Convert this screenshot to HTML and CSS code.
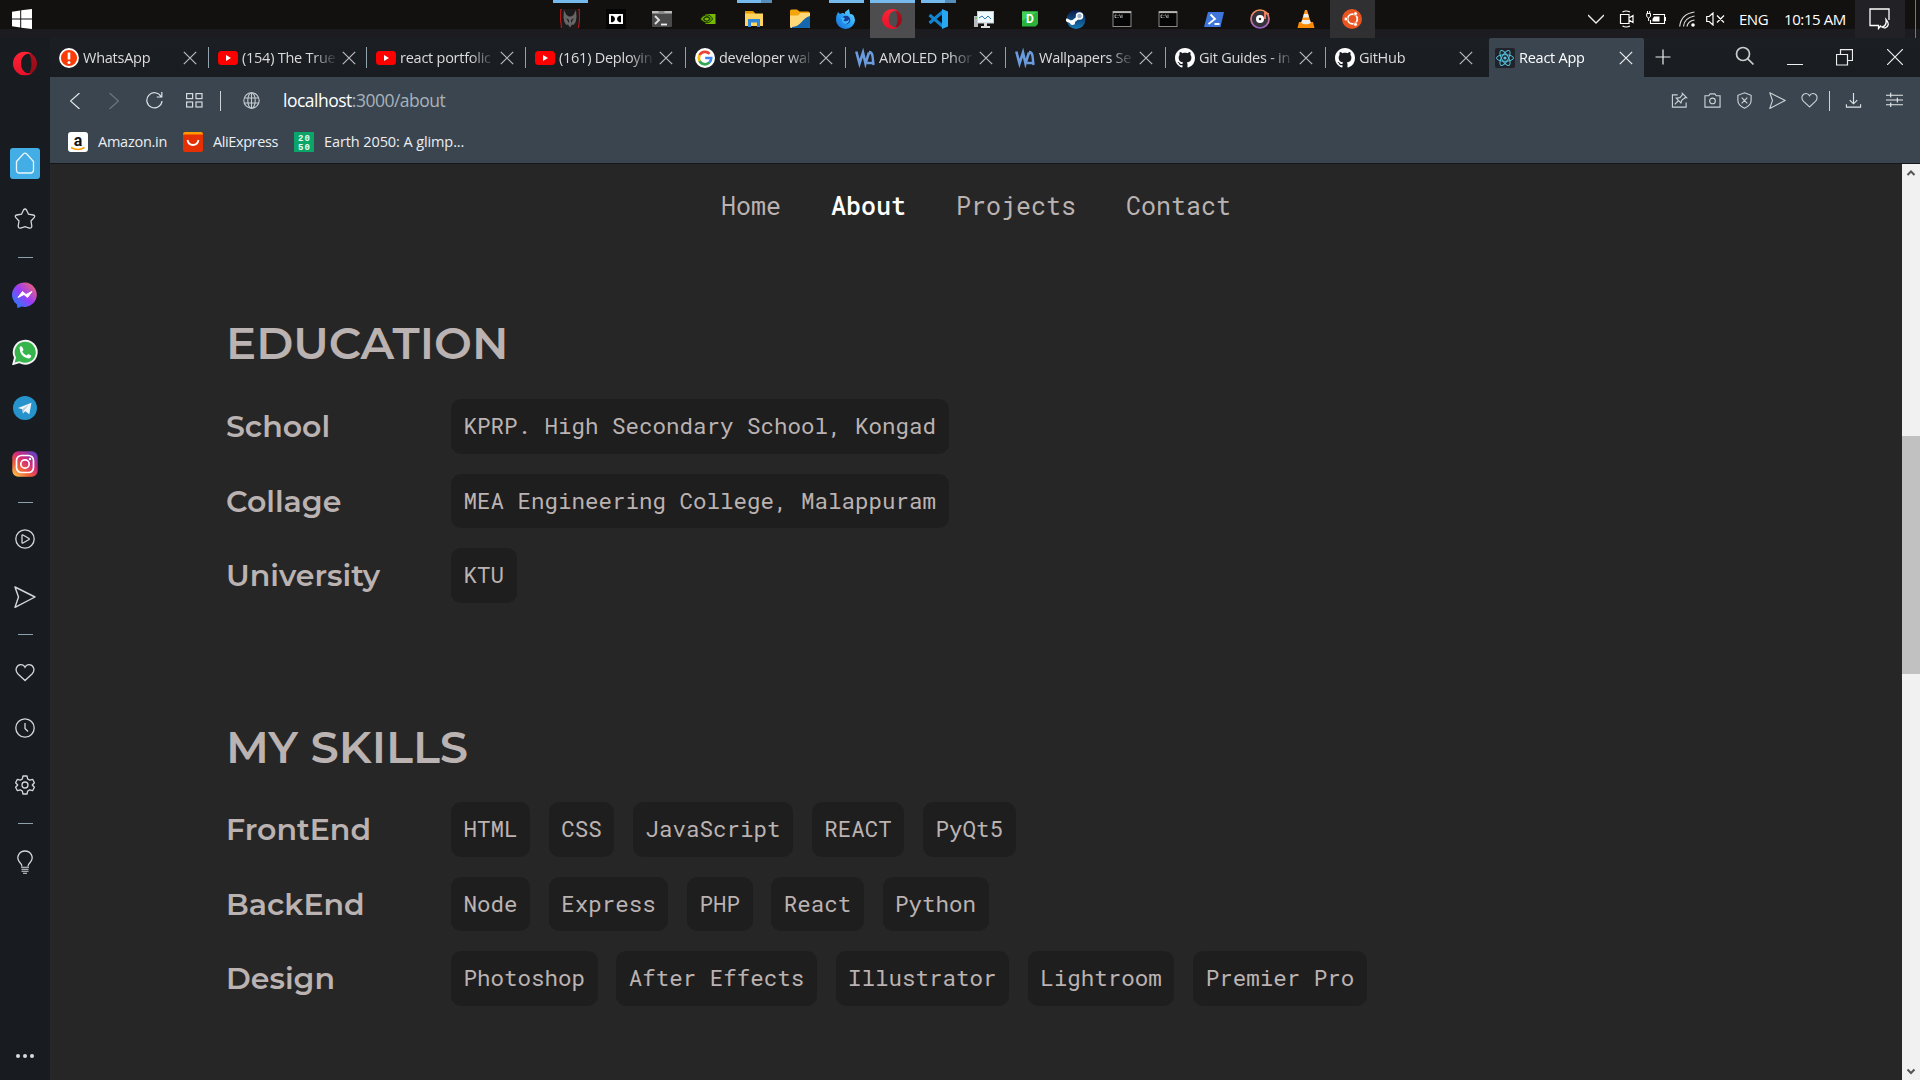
FILE: index.html
```html
<!DOCTYPE html>
<html lang="en">
<head>
<meta charset="utf-8">
<title>React App</title>
<link rel="stylesheet" href="styles.css">
</head>
<body>
<svg class="defs" width="0" height="0" aria-hidden="true">
  <defs>
    <linearGradient id="operaA" x1="0" y1="0" x2="0" y2="1"><stop offset="0" stop-color="#ff2436"/><stop offset="1" stop-color="#e8102a"/></linearGradient>
    <linearGradient id="operaB" x1="0" y1="0" x2="0" y2="1"><stop offset="0" stop-color="#b3101f"/><stop offset="1" stop-color="#8d0a15"/></linearGradient>
    <linearGradient id="msg" x1="0" y1="1" x2="1" y2="0"><stop offset="0" stop-color="#0a8cff"/><stop offset=".5" stop-color="#9a3cf5"/><stop offset="1" stop-color="#ff6a62"/></linearGradient>
    <linearGradient id="insta" x1="0.1" y1="1" x2=".9" y2="0"><stop offset="0" stop-color="#fdc650"/><stop offset=".3" stop-color="#f0603a"/><stop offset=".6" stop-color="#d02b7c"/><stop offset="1" stop-color="#5a45c8"/></linearGradient>
    <linearGradient id="groove" x1="0" y1="0" x2="0" y2="1"><stop offset="0" stop-color="#f79452"/><stop offset=".5" stop-color="#d47a8e"/><stop offset="1" stop-color="#9a60c8"/></linearGradient>
    <linearGradient id="fox" x1="1" y1="0" x2="0" y2="1"><stop offset="0" stop-color="#6fe3ff"/><stop offset=".5" stop-color="#2aa3f5"/><stop offset="1" stop-color="#1668d8"/></linearGradient>
    <linearGradient id="steam" x1="0" y1="0" x2="0" y2="1"><stop offset="0" stop-color="#0c1a4a"/><stop offset="1" stop-color="#137ab5"/></linearGradient>
    <symbol id="x" viewBox="0 0 14 14"><path d="M.8.8l12.4 12.4M13.2.8L.8 13.2" fill="none" stroke="currentColor" stroke-width="1.2"/></symbol>
    <symbol id="yt" viewBox="0 0 20 20"><rect y="3" width="20" height="14" rx="3.5" fill="#f00"/><path d="M8 7l5 3-5 3z" fill="#fff"/></symbol>
    <symbol id="wa" viewBox="0 0 20 20"><path d="M1.300 3.500L4.500 15.500 8 4.500l2.500 11L14 4.500" fill="none" stroke="#6a9bdc" stroke-width="2.600"/><path d="M14 4q3 0 3.500 4l1 9M12 15h6" fill="none" stroke="#6a9bdc" stroke-width="2.400"/></symbol>
    <symbol id="gh" viewBox="0 0 16 16"><path fill="#fff" d="M8 0C3.580 0 0 3.580 0 8c0 3.540 2.290 6.530 5.470 7.590.4.070.55-.17.55-.38 0-.19-.01-.82-.01-1.490-2.010.37-2.530-.49-2.690-.94-.09-.23-.48-.94-.82-1.130-.28-.15-.68-.52-.01-.53.63-.01 1.080.58 1.230.82.72 1.210 1.870.87 2.330.66.070-.52.28-.87.51-1.070-1.780-.2-3.640-.89-3.640-3.950 0-.87.31-1.590.82-2.150-.08-.2-.36-1.020.08-2.120 0 0 .67-.21 2.200.82.64-.18 1.320-.27 2-.27s1.360.09 2 .27c1.530-1.040 2.200-.82 2.200-.82.44 1.100.16 1.920.08 2.120.51.56.82 1.270.82 2.150 0 3.070-1.870 3.750-3.650 3.950.29.25.54.73.54 1.480 0 1.070-.01 1.930-.01 2.200 0 .21.15.46.55.38A8.010 8.010 0 0 0 16 8c0-4.420-3.580-8-8-8z"/></symbol>
    <symbol id="opera" viewBox="0 0 24 24"><path fill="url(#operaB)" d="M12 .5c6.500 0 12 5 12 11.500S18.500 23.500 12 23.500c4.500 0 6.500-5 6.500-11.500S16.500.5 12 .5z"/><path fill="url(#operaA)" fill-rule="evenodd" d="M12 0a12 12 0 1 0 0 24c3 0 5.500-1 7.500-2.800-5 2.600-11.500-1.200-11.500-9.200s6.500-11.800 11.500-9.200A11.500 11.500 0 0 0 12 0z"/></symbol>
    <symbol id="cmd" viewBox="0 0 20 20"><rect x="1" y="2.500" width="18" height="15" fill="#050505" stroke="#8a8a8a"/><path d="M1 3.200h18" stroke="#b5b5b5" stroke-width="1.800"/><path d="M4.500 6H3v2.500h1.500M6 6v.8M6 8v.8M7.500 5.500L9 9M10 5.500V9" fill="none" stroke="#ccc" stroke-width=".8"/></symbol>
    <symbol id="heart" viewBox="0 0 20 20"><path d="M10 17.500L3 11C-1 6.500 2 1.700 6 1.700c2 0 3.200 1 4 2.600.8-1.600 2-2.600 4-2.600 4 0 7 4.800 3 9.300z" fill="none" stroke="currentColor" stroke-width="1.300"/></symbol>
    <symbol id="send" viewBox="0 0 22 22"><path d="M1 1l20 10L1 21.300 4.500 11z" fill="none" stroke="currentColor" stroke-width="1.400" stroke-linejoin="round"/></symbol>
  </defs>
</svg>

<header class="taskbar">
  <svg class="start" viewBox="0 0 20 20"><path fill="#fff" d="M0 2.700L8.200 1.500v8H0zM9.200 1.300L20 0v9.500H9.200zM0 10.500h8.200v8L0 17.300zM9.200 10.500H20V20L9.200 18.700z"/></svg>
  <div class="apps">
    <span class="app run"><svg viewBox="0 0 20 20"><rect x="1.500" width="17" height="20" fill="#1c1a1a"/><path d="M2 .5H.8L.5 10l1 9M18 .5h1.200l.3 9.500-1 9" stroke="#b81818" stroke-width="1.200" fill="none"/><path d="M4 1l2.500 5L9 7.500h2L13.500 6 16 1l.5 7-.8 5-2.200 3-1.500-.5-2 3-2-3-1.500.5-2.200-3-.8-5z" fill="#666"/><path d="M6 9l3 2v3zM14 9l-3 2v3z" fill="#1c1a1a"/></svg></span>
    <span class="app"><svg viewBox="0 0 20 20"><rect width="20" height="20" fill="#050505"/><path fill="#fff" d="M3 5h14v10H3z"/><path d="M5 6.800h1.500q2.500.7 2.500 3.200t-2.500 3.200H5zM15 6.800h-1.500q-2.500.7-2.500 3.200t2.500 3.200H15z"/></svg></span>
    <span class="app"><svg viewBox="0 0 20 20"><rect y="2" width="20" height="16" rx="1" fill="#4a4a4a"/><path d="M0 4V2h20v2.500H0z" fill="#bbb"/><path d="M6.500 2h6v2.500h-6z" fill="#888"/><path d="M3 7l4 4-4 4" fill="none" stroke="#ddd" stroke-width="2"/><path d="M9 15.500h6" stroke="#eee" stroke-width="1.800"/></svg></span>
    <span class="app"><svg viewBox="0 0 20 20"><path fill="#76b900" d="M7.500 5h10v10h-10z"/><path d="M2.500 10c4-6 10-5 12 0-3 5-8 5-12 0z" fill="#76b900" stroke="#173000"/><path d="M5.500 10c2-3 5-3 6.500 0-2 3-5 2.500-6.500 0z" fill="none" stroke="#173000" stroke-width="1.300"/></svg></span>
    <span class="app run many"><svg viewBox="0 0 20 20"><path fill="#e69a08" d="M1 2h8l2 2v3H1z"/><path fill="#ffd55f" d="M1 4.500h18V17H1z"/><path fill="#2e87dd" d="M4 10h12v8h-3v-4.500H7V18H4z"/></svg></span>
    <span class="app"><svg viewBox="0 0 20 20"><path fill="#f4a40d" d="M0 2q0-1.500 1.500-1.500H7l2.500 2H18q2 0 2 2V9H0z"/><path fill="#ffd879" d="M0 6.500h8L10.500 4H20v13.500q0 1.500-1.500 1.500h-17Q0 19 0 17.500z"/><path fill="#1567ad" d="M2 18c9 0 10-9 18-11v10.500q0 1.500-1.500 1.500H2z"/></svg></span>
    <span class="app run"><svg viewBox="0 0 20 20"><path fill="url(#fox)" d="M2 3l2 2q3-2 5 0V3l4-3 1 5q4-1 5 6a9.500 9 0 0 1-19 0q0-5 2-8z"/><circle cx="10" cy="11" r="4.300" fill="#183a91"/><path d="M5 8l4 1-1.500 3q4 1 6-2-1 7-7 4z" fill="#3bb5ff"/></svg></span>
    <span class="app run active"><svg viewBox="0 0 24 24"><use href="#opera"/></svg></span>
    <span class="app run many"><svg viewBox="0 0 20 20"><path d="M1.500 6L15 17.500M1.500 14L15 2.500" stroke="#1384cf" stroke-width="3"/><path fill="#28a8f2" d="M14 0l6 2.500v15L14 20z"/></svg></span>
    <span class="app"><svg viewBox="0 0 20 20"><path fill="#b4b8ba" d="M0 7h4v11H0z"/><path d="M1 9h2" stroke="#3c3"/><rect x="3.500" y="2.500" width="16" height="11.500" fill="#eefaff" stroke="#c8cdcf"/><path d="M5 9l3-2 3 3 3-3 3 3" stroke="#2f78b4" fill="none"/><path d="M10 14h3v3h3v2H7v-2h3z" fill="#ddd"/></svg></span>
    <span class="app"><svg viewBox="0 0 20 20"><path fill="#29b33a" d="M2 2.500h16V15l-2.500 2.500H2z"/><path fill="#43d055" d="M2 2.500h16L2 12z"/><text x="10" y="14.200" class="glyph-d">D</text></svg></span>
    <span class="app"><svg viewBox="0 0 20 20"><circle cx="10" cy="10.500" r="9.500" fill="url(#steam)"/><path d="M0 10.500l6 3 5.500-4.500" stroke="#fff" stroke-width="3" fill="none"/><circle cx="6.500" cy="13.500" r="2.500" fill="#fff"/><circle cx="13.500" cy="7" r="3" fill="#9db4cf" stroke="#fff" stroke-width="1.500"/></svg></span>
    <span class="app"><svg viewBox="0 0 20 20"><use href="#cmd"/></svg></span>
    <span class="app"><svg viewBox="0 0 20 20"><use href="#cmd"/></svg></span>
    <span class="app"><svg viewBox="0 0 20 20"><path fill="#3e76db" d="M4 3h16l-3.500 15H0z"/><path d="M6.500 5.500L11 10l-6.500 5M10.500 15h5" fill="none" stroke="#fff" stroke-width="1.800"/></svg></span>
    <span class="app"><svg viewBox="0 0 20 20"><circle cx="10" cy="10" r="9" fill="#35323c" stroke="url(#groove)" stroke-width="1.700"/><circle cx="10" cy="10" r="4" fill="#fff"/><circle cx="10" cy="10" r="1.200" fill="#333"/><path d="M15 10V4l4 1" fill="none" stroke="#f58560" stroke-width="1.800"/></svg></span>
    <span class="app"><svg viewBox="0 0 20 20"><path fill="#f98a05" d="M3 13h14l1.500 6h-17z"/><path fill="#ff9a1e" d="M9 1h2l4 13q-5 3-10 0z"/><path d="M8 5h4l1 3.500H7zM6.200 11h7.600l1 3q-5 2.500-9.600 0z" fill="#eee"/></svg></span>
    <span class="app shaded"><svg viewBox="0 0 20 20"><circle cx="10" cy="10" r="10" fill="#e95420"/><circle cx="10.500" cy="10" r="4.800" fill="none" stroke="#fff" stroke-width="1.800"/><g fill="#fff" stroke="#e95420" stroke-width=".7"><circle cx="4" cy="10" r="1.900"/><circle cx="13.500" cy="4.600" r="1.900"/><circle cx="13.500" cy="15.400" r="1.900"/></g></svg></span>
  </div>
  <div class="tray">
    <svg class="t-chev" viewBox="0 0 16 16"><path d="M0 4l8 8 8-8" fill="none" stroke="#eee" stroke-width="1.300"/></svg>
    <svg class="t-cam" viewBox="0 0 16 18"><path d="M1.500 4.500h8.500v9H1.500zM10 8l4-2.500v7L10 10M3.500 2Q7 0 11 2M3.500 16q3.500 2 7.500 0" fill="none" stroke="#fff" stroke-width="1.200"/></svg>
    <svg class="t-bat" viewBox="0 0 20 16"><path d="M7 3.500h11.500v9H4.500V9M18.500 6.500h1v3h-1" fill="none" stroke="#fff" stroke-width="1.100"/><path d="M8 5.500h5.500v5H6.500V8z" fill="#fff"/><path d="M.7 2.500h3.800v3L2.600 7 .7 5.500zM2.600 7v3M1.500 0v2.500M3.700 0v2.500" fill="none" stroke="#fff"/></svg>
    <svg class="t-wifi" viewBox="0 0 16 16"><g fill="none" stroke="#ddd" stroke-width="1.200"><path d="M.7 15.500Q2 3 15.500 1"/><path d="M4.500 15.500Q5 7 15.500 5"/><path d="M8 15.500Q9 10 15.500 9"/></g><circle cx="14" cy="14" r="1.800" fill="#fff"/></svg>
    <svg class="t-vol" viewBox="0 0 19 14"><path d="M.7 4.500h2.500L7 1v12L3.200 9.500H.7zM11 3.500l7 7M18 3.500l-7 7" fill="none" stroke="#fff" stroke-width="1.200"/></svg>
    <span class="lang">ENG</span>
    <span class="clock">10:15 AM</span>
    <span class="notif"><svg viewBox="0 0 22 22"><path d="M12 17.500l-2.500 3v-3H1V1h19v11" fill="none" stroke="#fff" stroke-width="1.300"/><path d="M17 11.500q5 6-1 8.500l-3-1q5-1 4-7.500z" fill="none" stroke="#fff" stroke-width="1.300"/></svg></span>
    <span class="peek"></span>
  </div>
</header>

<div class="browser">
  <aside class="sidebar">
    <svg width="24" height="25" viewBox="0 0 24 24"><use href="#opera"/></svg>
    <span></span>
    <span class="home"><svg width="20" height="22" viewBox="0 0 20 22"><path d="M1.500 9.500L8.500 1.800q1.500-1.300 3 0l7 7.700V18q0 3-3 3h-11q-3 0-3-3z" fill="none" stroke="#e8f6ff" stroke-width="1.300"/></svg></span>
    <svg width="22" height="22" viewBox="0 0 22 22"><path d="M9.500 2q1.500-2 3 0l2 4.200 4.700.8q2.500.6.9 2.700L17 13l.8 5q0 2.500-2.500 2L11 18.600 6.700 20q-2.500.5-2.500-2L5 13 1.900 9.700Q.3 7.600 2.800 7l4.700-.8z" fill="none" stroke="#d4d8da" stroke-width="1.300"/></svg>
    <i class="rule"></i>
    <svg width="26" height="26" viewBox="0 0 26 26"><path fill="url(#msg)" d="M13 .5a12.200 12.200 0 1 1-3.500 24l-3.500 1.500q-1 0-1-3.500A12.200 12.200 0 0 1 13 .5z"/><path d="M6 15.500l4.500-6 3.500 3 6-3-4.500 6-3.500-3z" fill="#fff" stroke="#fff"/></svg>
    <svg width="26" height="26" viewBox="0 0 26 26"><path d="M1.300 25L3 18.500A11.500 11.500 0 1 1 7.500 23.200z" fill="#35b54b" stroke="#f4f4f4" stroke-width="1.900"/><path d="M7.500 8.500Q9 6 10.500 8.500l1 2.500-1.300 1.700Q12 15.500 14.700 16.500l1.500-1.500 3 1.500q0 3-3 3Q8 18 7.500 8.500z" fill="#fff"/></svg>
    <svg width="24" height="24" viewBox="0 0 24 24"><circle cx="12" cy="12" r="12" fill="#2693cd"/><path d="M5 12l13.500-5.300-2.200 11.500-4-3-2.300 2.300-.7-4.200z" fill="#eef4f8"/><path d="M9.300 13.300L16 8.500l-5 6-1 3z" fill="#b5cbda"/></svg>
    <svg width="26" height="26" viewBox="0 0 26 26"><rect x=".3" y=".3" width="25.400" height="25.400" rx="6" fill="url(#insta)"/><rect x="4.500" y="4.500" width="17" height="17" rx="5" fill="none" stroke="#fff" stroke-width="1.700"/><circle cx="13" cy="13" r="4.200" fill="none" stroke="#fff" stroke-width="1.700"/><circle cx="18" cy="8" r="1.200" fill="#fff"/></svg>
    <i class="rule"></i>
    <svg width="20" height="20" viewBox="0 0 20 20"><g fill="none" stroke="#d4d8da" stroke-width="1.300"><circle cx="10" cy="10" r="9.200"/><path d="M7 6.500q0-1 1-.5l6 3.500q.7.500 0 1L8 14q-1 .5-1-.5z"/></g></svg>
    <svg width="22" height="22" viewBox="0 0 22 22"><use href="#send"/></svg>
    <i class="rule"></i>
    <svg width="20" height="20" viewBox="0 0 20 20"><use href="#heart"/></svg>
    <svg width="20" height="20" viewBox="0 0 20 20"><path d="M10 5v5.500l3 3" fill="none" stroke="#d4d8da" stroke-width="1.300"/><circle cx="10" cy="10" r="9.200" fill="none" stroke="#d4d8da" stroke-width="1.300"/></svg>
    <svg width="20" height="20" viewBox="0 0 20 20"><g fill="none" stroke="#d4d8da" stroke-width="1.300" stroke-linejoin="round"><circle cx="10" cy="10" r="3"/><path d="M8 1h4l.7 3 2 1.100 2.900-.8 1.800 3.400L17.300 10l2.100 2.300-1.800 3.400-2.900-.8-2 1.100-.7 3H8l-.7-3-2-1.100-2.900.8-1.800-3.400L2.700 10 .6 7.700l1.800-3.400 2.900.8 2-1.100z"/></g></svg>
    <i class="rule"></i>
    <svg width="18" height="24" viewBox="0 0 18 24"><path d="M6 16.500q0-2-2.500-4.500C-.5 7 3.500 1 9 1s9.500 6 5.500 11Q12 14.500 12 16.500" fill="none" stroke="#d4d8da" stroke-width="1.300"/><path d="M5 17.300h8M5.500 19.300h7M5.500 21.300h7M7 23.300h4" stroke="#d4d8da" stroke-width="1.100"/></svg>
    <span></span>
    <svg width="18" height="4" viewBox="0 0 18 4" fill="#d8dcde"><circle cx="2" cy="2" r="2"/><circle cx="9" cy="2" r="2"/><circle cx="16" cy="2" r="2"/></svg>
  </aside>

  <div class="window">
    <div class="tabstrip">
      <div class="tab"><svg class="fav" viewBox="0 0 20 20"><circle cx="10" cy="10" r="9" fill="#fb3b08" stroke="#fff" stroke-width="1.800"/><path d="M10 4.500v7" stroke="#fff" stroke-width="2.600"/><circle cx="10" cy="14.500" r="1.500" fill="#fff"/></svg><span class="title">WhatsApp</span><svg class="close"><use href="#x"/></svg></div>
      <div class="tab"><svg class="fav"><use href="#yt"/></svg><span class="title">(154) The True</span><svg class="close"><use href="#x"/></svg></div>
      <div class="tab"><svg class="fav"><use href="#yt"/></svg><span class="title">react portfolic</span><svg class="close"><use href="#x"/></svg></div>
      <div class="tab"><svg class="fav"><use href="#yt"/></svg><span class="title">(161) Deployin</span><svg class="close"><use href="#x"/></svg></div>
      <div class="tab"><svg class="fav" viewBox="0 0 20 20"><circle cx="10" cy="10" r="10" fill="#fff"/><g fill="none" stroke-width="2.700"><path d="M14.600 5.800A6.200 6.200 0 0 0 4.500 7.200" stroke="#ea4335"/><path d="M4.500 7.200a6.200 6.200 0 0 0 0 5.600" stroke="#fbbc05"/><path d="M4.500 12.800a6.200 6.200 0 0 0 9.800 1.800" stroke="#34a853"/><path d="M14.300 14.600A6.200 6.200 0 0 0 16.200 10H10.200" stroke="#4285f4"/></g></svg><span class="title">developer wal</span><svg class="close"><use href="#x"/></svg></div>
      <div class="tab"><svg class="fav"><use href="#wa"/></svg><span class="title">AMOLED Phor</span><svg class="close"><use href="#x"/></svg></div>
      <div class="tab"><svg class="fav"><use href="#wa"/></svg><span class="title">Wallpapers Se</span><svg class="close"><use href="#x"/></svg></div>
      <div class="tab"><svg class="fav"><use href="#gh"/></svg><span class="title">Git Guides - in</span><svg class="close"><use href="#x"/></svg></div>
      <div class="tab last"><svg class="fav"><use href="#gh"/></svg><span class="title">GitHub</span><svg class="close"><use href="#x"/></svg></div>
      <div class="tab current"><svg class="fav" viewBox="0 0 20 20"><rect width="20" height="20" rx="2" fill="#20232a"/><g fill="none" stroke="#53c1dd" stroke-width="1"><ellipse cx="10" cy="10" rx="8.500" ry="3.300"/><ellipse cx="10" cy="10" rx="8.500" ry="3.300" transform="rotate(60 10 10)"/><ellipse cx="10" cy="10" rx="8.500" ry="3.300" transform="rotate(120 10 10)"/></g><circle cx="10" cy="10" r="1.600" fill="#53c1dd"/></svg><span class="title">React App</span><svg class="close"><use href="#x"/></svg></div>
      <div class="controls">
        <svg class="c-plus" viewBox="0 0 16 16"><path d="M8 .5v15M.5 8h15" stroke="#eee" stroke-width="1.200"/></svg>
        <svg class="c-find" viewBox="0 0 20 20"><circle cx="8" cy="8" r="6.500" fill="none" stroke="#ccc" stroke-width="1.700"/><path d="M12.800 12.800L18.500 18.500" stroke="#ccc" stroke-width="1.700"/></svg>
        <svg class="c-min" viewBox="0 0 16 16"><path d="M0 15.500h16" stroke="#eee"/></svg>
        <svg class="c-max" viewBox="0 0 17 17"><path d="M.5 5.500h11v10.500H.5zM4.500 5.500V.7h12v10.800h-5" fill="none" stroke="#eee" stroke-width="1.200"/></svg>
        <svg class="c-close" viewBox="0 0 16 16"><path d="M0 0l16 16M16 0L0 16" stroke="#eee" stroke-width="1.200"/></svg>
      </div>
    </div>

    <div class="toolbar">
      <div class="address">
        <svg class="a-back" viewBox="0 0 10 16"><path d="M9.500 0l-9 8 9 8" fill="none" stroke="#e6e9eb" stroke-width="1.200"/></svg>
        <svg class="a-fwd" viewBox="0 0 10 16"><path d="M.5 0l9 8-9 8" fill="none" stroke="#6c7883" stroke-width="1.200"/></svg>
        <svg class="a-load" viewBox="0 0 17 17"><path d="M15 4.500A7.600 7.600 0 1 0 16 9M15.800 0v5h-5" fill="none" stroke="#dfe3e6" stroke-width="1.200"/></svg>
        <svg class="a-grid" viewBox="0 0 17 15"><g fill="none" stroke="#d5dade" stroke-width="1.200"><rect x=".6" y=".6" width="6" height="5"/><rect x="10" y=".6" width="6" height="5"/><rect x=".6" y="9" width="6" height="5"/><rect x="10" y="9" width="6" height="5"/></g></svg>
        <i class="bar"></i>
        <svg class="a-globe" viewBox="0 0 17 17"><g fill="none" stroke="#c5cbd0" stroke-width="1.100"><circle cx="8.500" cy="8.500" r="7.700"/><ellipse cx="8.500" cy="8.500" rx="3.700" ry="7.700"/><path d="M8.500.8v15.400M1 6h15M1 11h15"/></g></svg>
        <span class="url"><b>localhost</b>:3000/about</span>
        <div class="actions">
          <svg viewBox="0 0 18 18"><g fill="none" stroke="#ccd2d6" stroke-width="1.200"><path d="M7 3H1.500v13H16v-5M4 13l4-4M5.500 6.500l5 5 1-3 3.500-2.500h1.500L12 1.500V3L9.500 6z"/></g></svg>
          <svg viewBox="0 0 18 18"><g fill="none" stroke="#ccd2d6" stroke-width="1.200"><path d="M1 4h4l1.500-2h5L13 4h4v12H1z"/><circle cx="9" cy="9.500" r="3"/></g></svg>
          <svg viewBox="0 0 18 18"><path d="M9 .8l7 2.700V9q0 5-7 8.200Q2 14 2 9V3.500zM6 6l6 6M12 6l-6 6" fill="none" stroke="#ccd2d6" stroke-width="1.200"/></svg>
          <svg viewBox="0 0 22 22"><use href="#send"/></svg>
          <svg viewBox="0 0 20 20"><use href="#heart"/></svg>
          <i class="bar"></i>
          <svg viewBox="0 0 18 18"><path d="M9 1v11M5 8.500L9 12.500l4-4M1.500 13v3h15v-3" fill="none" stroke="#dfe3e6" stroke-width="1.200"/></svg>
          <svg viewBox="0 0 18 18"><path d="M0 3.500h18M0 8.500h18M0 13.500h18M5 .8v5M12 6v5M5 11v5" fill="none" stroke="#e6e9eb" stroke-width="1.200"/></svg>
        </div>
      </div>
      <div class="bookmarks">
        <svg class="bm" viewBox="0 0 20 20"><rect width="20" height="20" rx="3" fill="#fff"/><text x="10" y="13.500" class="glyph-a">a</text><path d="M3 15.500q7 4 13.500 0" fill="none" stroke="#f90" stroke-width="1.500"/></svg>
        <span class="bm-amazon">Amazon.in</span>
        <svg class="bm" viewBox="0 0 20 20"><rect width="20" height="20" rx="2" fill="#e52f04"/><path d="M0 2.500Q0 0 2 0h16q2 0 2 2.500z" fill="#ff9a00"/><path d="M4.500 8q1 5 5.500 5t5.500-5" fill="none" stroke="#fff" stroke-width="1.800"/></svg>
        <span class="bm-ali">AliExpress</span>
        <svg class="bm" viewBox="0 0 20 20"><rect width="20" height="20" fill="#0ba56a"/><text x="10.500" y="8.700" class="glyph-n">20</text><text x="10.500" y="18.200" class="glyph-n">50</text></svg>
        <span class="bm-earth">Earth 2050: A glimp...</span>
      </div>
    </div>

    <div class="viewport">
      <main class="page">
        <nav class="nav"><a>Home</a><a class="on">About</a><a>Projects</a><a>Contact</a></nav>
        <section class="block education">
          <h2>EDUCATION</h2>
          <div class="rows">
            <div class="row"><h3>School</h3><span class="chip">KPRP. High Secondary School, Kongad</span></div>
            <div class="row"><h3>Collage</h3><span class="chip">MEA Engineering College, Malappuram</span></div>
            <div class="row"><h3>University</h3><span class="chip">KTU</span></div>
          </div>
        </section>
        <section class="block skills">
          <h2>MY SKILLS</h2>
          <div class="rows">
            <div class="row"><h3>FrontEnd</h3><span class="chip">HTML</span><span class="chip">CSS</span><span class="chip">JavaScript</span><span class="chip">REACT</span><span class="chip">PyQt5</span></div>
            <div class="row"><h3>BackEnd</h3><span class="chip">Node</span><span class="chip">Express</span><span class="chip">PHP</span><span class="chip">React</span><span class="chip">Python</span></div>
            <div class="row"><h3>Design</h3><span class="chip">Photoshop</span><span class="chip">After Effects</span><span class="chip">Illustrator</span><span class="chip">Lightroom</span><span class="chip">Premier Pro</span></div>
          </div>
        </section>
      </main>
      <div class="scrollbar">
        <svg viewBox="0 0 18 18"><path d="M5.500 11L9 7.500l3.500 3.500" fill="none" stroke="#555" stroke-width="2"/></svg>
        <i class="thumb"></i>
        <svg viewBox="0 0 18 18"><path d="M5.500 7.500L9 11l3.500-3.500" fill="none" stroke="#555" stroke-width="2"/></svg>
      </div>
    </div>
  </div>
</div>
</body>
</html>
```
FILE: styles.css
```css
* { box-sizing: border-box; }
body {
  margin: 0;
  width: 1920px;
  height: 1080px;
  overflow: hidden;
  display: flex;
  flex-direction: column;
  background: #181c20;
  font-family: "Open Sans", "Noto Sans", sans-serif;
  color: #dcdcdc;
}
.defs { position: absolute; }
svg { display: block; flex: none; }

/* Taskbar */
.taskbar {
  height: 38px;
  flex: none;
  display: flex;
  background: linear-gradient(#121110 0 29px, #1b1b20 29px);
}
.start { width: 20px; height: 20px; margin: 9px 516px 0 12px; }
.apps { display: flex; }
.app {
  width: 46px;
  height: 38px;
  padding: 9px 1px 0 0;
  display: flex;
  flex-direction: column;
  align-items: center;
  border-right: 1px solid transparent;
  background-clip: padding-box;
}
.app svg { width: 20px; height: 20px; }
.run { background: linear-gradient(#76b9ed, #76b9ed) 5px 0 / 35px 3px no-repeat; }
.many { background: linear-gradient(90deg, #76b9ed 24px, #558db8 24px) 5px 0 / 35px 3px no-repeat; }
.active { background: linear-gradient(#76b9ed 3px, #4d4d50 3px); background-clip: padding-box; }
.shaded { background: #303033; background-clip: padding-box; }
.glyph-d { font: 700 12px Roboto, sans-serif; fill: #fff; text-anchor: middle; }
.tray { display: flex; align-items: center; height: 38px; font-size: 15px; color: #fff; }
.t-chev { width: 16px; height: 16px; margin-left: 212px; }
.t-cam { width: 16px; height: 18px; margin-left: 15px; }
.t-bat { width: 20px; height: 16px; margin-left: 11px; }
.t-wifi { width: 16px; height: 16px; margin-left: 13px; }
.t-vol { width: 19px; height: 14px; margin-left: 11px; }
.lang { margin: -1px 0 0 14px; width: 45px; letter-spacing: -.5px; }
.clock { margin-top: -1px; width: 71px; letter-spacing: -.4px; white-space: nowrap; }
.notif { width: 50px; height: 38px; padding: 8px 0 0 14px; background: #222226; }
.notif svg { width: 22px; height: 22px; }
.peek { width: 1px; height: 38px; margin-left: 10px; background: #77777a; }

/* Browser frame */
.browser { flex: 1; display: flex; min-height: 0; }
.sidebar {
  width: 50px;
  display: grid;
  grid-template-rows: 50px 52px 46px 66px 10px 65px 50px 62px 50px 26px 48px 67px 8px 69px 42px 72px 4px 74px 1fr 48px;
  place-items: center;
  color: #d4d8da;
}
.home { width: 30px; height: 31px; border-radius: 3px; background: #43ade6; display: grid; place-items: center; }
.rule { width: 15px; height: 1px; background: #8ea0ac; }
.window { flex: 1; display: flex; flex-direction: column; min-width: 0; }

/* Tabs */
.tabstrip {
  height: 39px;
  display: grid;
  grid-template-columns: 159px 158px 159px repeat(5, 160px) 163px 155px 1fr;
  background: linear-gradient(#1b1e23, #191c20);
}
.tab {
  display: flex;
  align-items: center;
  padding-left: 9px;
  background: linear-gradient(#93a3ae, #93a3ae) right 9px / 1px 21px no-repeat;
  min-width: 0;
}
.tab.last, .tab.current { background-image: none; }
.tab.current { background-color: #3a4550; border-radius: 2px 2px 0 0; color: #fff; padding-left: 6px; }
.fav { width: 20px; height: 20px; }
.title {
  width: 94px;
  margin: -1px 6px 0 4px;
  overflow: hidden;
  white-space: nowrap;
  font-size: 14.5px;
  letter-spacing: -.25px;
  -webkit-mask: linear-gradient(90deg, #000 70px, transparent 96px);
  mask: linear-gradient(90deg, #000 70px, transparent 96px);
}
.close { width: 14px; height: 14px; color: #b9bcbe; }
.current .close { color: #eee; }
.controls { display: flex; }
.c-plus { width: 16px; height: 16px; margin: 11px 0 0 11px; }
.c-find { width: 20px; height: 20px; margin: 8px 0 0 64px; }
.c-min { width: 16px; height: 16px; margin: 11px 0 0 32px; }
.c-max { width: 17px; height: 17px; margin: 11px 0 0 33px; }
.c-close { width: 16px; height: 16px; margin: 11px 0 0 34px; }

/* Toolbar */
.toolbar { height: 87px; flex: none; background: #3a4550; border-bottom: 1px solid #15181b; }
.address { height: 47px; display: flex; align-items: center; }
.a-back { width: 10px; height: 16px; margin-left: 20px; }
.a-fwd { width: 10px; height: 16px; margin-left: 29px; }
.a-load { width: 17px; height: 17px; margin-left: 27px; }
.a-grid { width: 17px; height: 15px; margin-left: 23px; }
.bar { width: 1px; height: 20px; background: #ccd2d6; }
.address > .bar { margin-left: 17px; }
.a-globe { width: 17px; height: 17px; margin-left: 22px; }
.url { margin: -1px auto 0 23px; font-size: 17.5px; letter-spacing: -.5px; color: #a9b2ba; }
.url b { font-weight: 400; color: #fff; }
.actions {
  display: grid;
  grid-template-columns: 33px 32px 33px 32px 32px 8px 41px 40px;
  place-items: center;
  margin-right: 6px;
  color: #ccd2d6;
}
.actions svg { width: 17px; height: 17px; }
.bookmarks { height: 36px; display: flex; align-items: center; font-size: 14.5px; letter-spacing: -.25px; color: #eceef0; white-space: nowrap; }
.bookmarks span { margin-top: -2px; }
.bm { width: 20px; height: 20px; }
.bm:first-child { margin-left: 18px; }
.bm-amazon { margin-left: 10px; width: 85px; }
.bm-ali { margin-left: 10px; width: 81px; letter-spacing: -.4px; }
.bm-earth { margin-left: 10px; letter-spacing: -.1px; }
.glyph-a { font: 700 16px Roboto, sans-serif; text-anchor: middle; fill: #111; }
.glyph-n { font: 700 9px "Liberation Mono", monospace; letter-spacing: 1px; text-anchor: middle; fill: #e7fff2; }

/* Page */
.viewport { flex: 1; display: flex; min-height: 0; background: #262626; }
.page { flex: 1; color: #bbb2b2; }
.nav {
  display: flex;
  justify-content: center;
  gap: 50px;
  height: 83px;
  align-items: center;
  font: 25px "Roboto Mono", "Liberation Mono", monospace;
}
.on { color: #fff; font-weight: 500; }
.block { padding-left: 176px; }
.education { padding-top: 68px; }
.skills { padding-top: 116px; }
h2, h3 { margin: 0; font-family: Montserrat, Inter, sans-serif; font-weight: 600; white-space: nowrap; }
h2 { height: 56px; line-height: 56px; font-size: 45px; }
h3 { width: 225px; font-size: 30px; padding-top: 1px; }
.rows { display: flex; flex-direction: column; gap: 20px; margin-top: 28px; }
.skills .rows { margin-top: 27.5px; }
.row { display: flex; align-items: center; height: 54.5px; }
.chip {
  height: 100%;
  padding: 0 12.5px;
  border-radius: 10px;
  background: #1e1e1e;
  font: 22.500px/53px "Roboto Mono", "Liberation Mono", monospace;
  white-space: nowrap;
}
.chip + .chip { margin-left: 18.75px; }

/* Scrollbar */
.scrollbar { width: 18px; display: flex; flex-direction: column; background: #f1f1f1; }
.scrollbar svg { width: 18px; height: 18px; }
.thumb { height: 238px; margin: 254px 0 auto; background: #c1c1c1; }
```
